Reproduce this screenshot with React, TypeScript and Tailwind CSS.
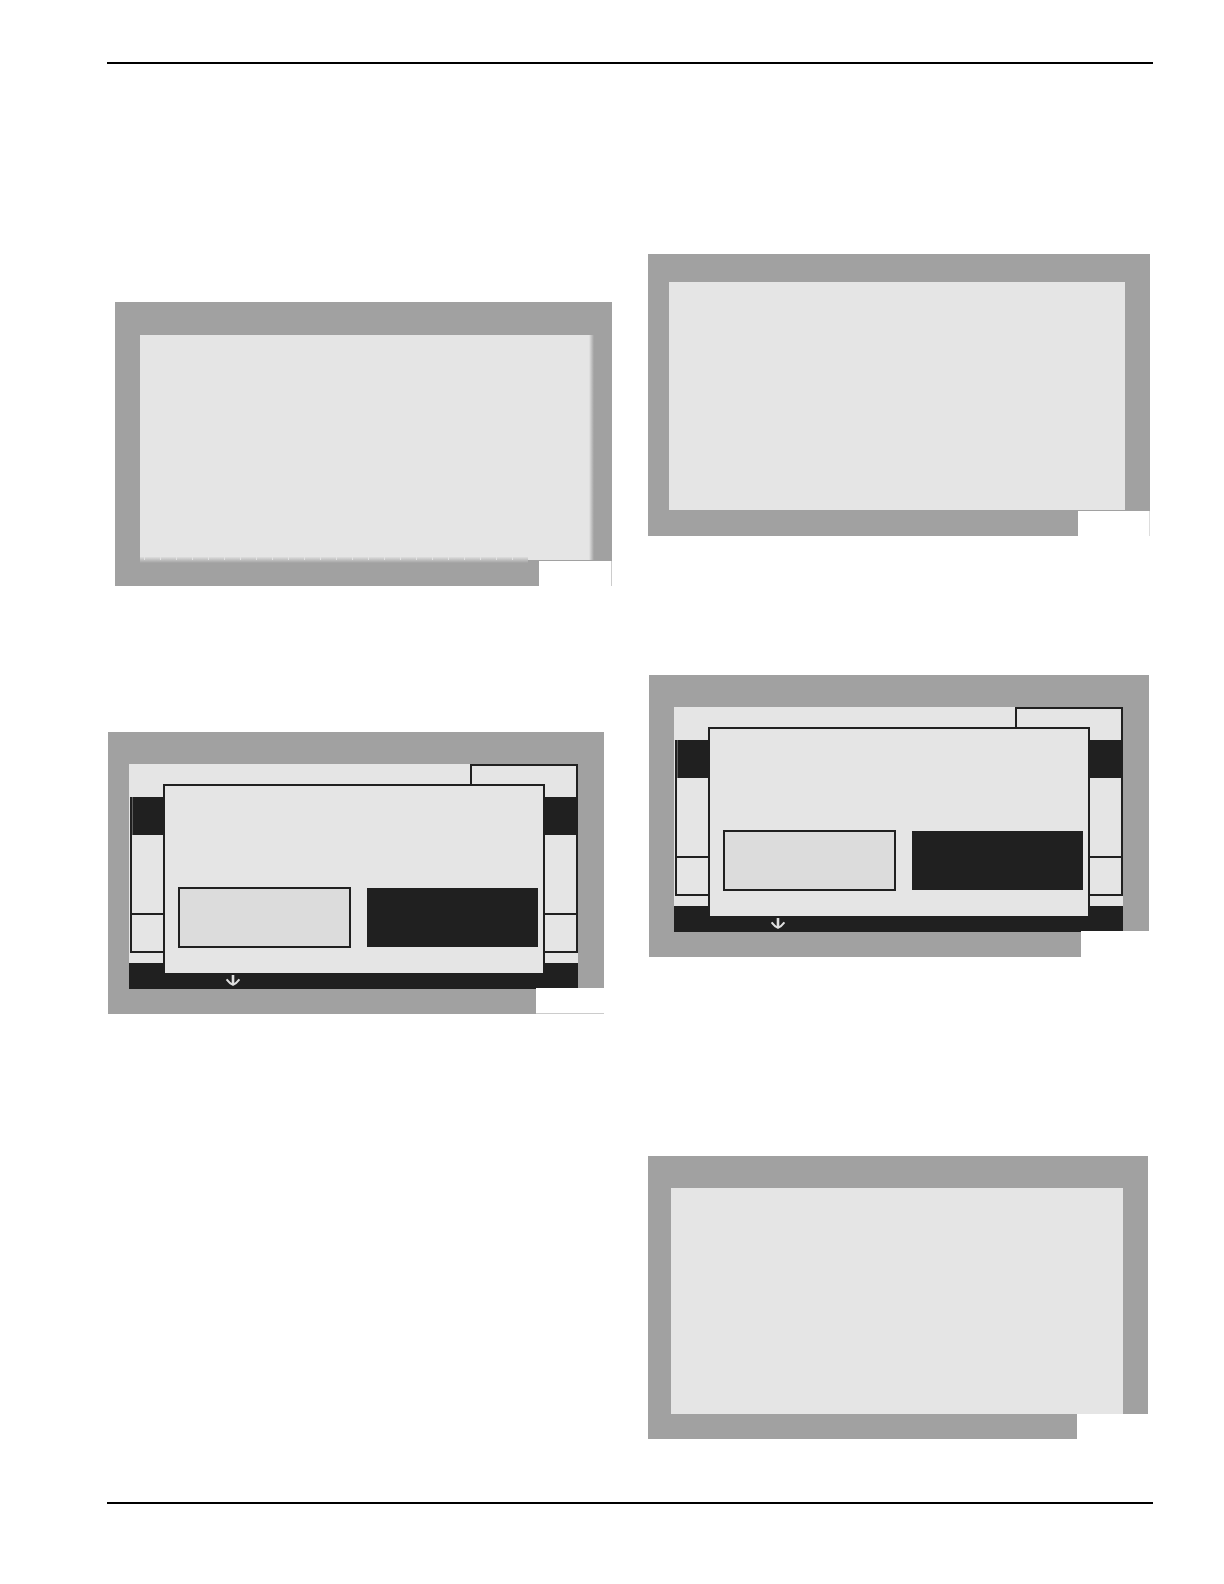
import type { ReactNode } from "react";

type FigureProps = {
  label: string;
  spacing: string;
  frame: string;
  strip: string;
  corner?: string;
  children: ReactNode;
};

/* A display surrounded by a grey bezel whose lower right corner is cut out. */
function Figure({ label, spacing, frame, strip, corner = "", children }: FigureProps) {
  return (
    <figure aria-label={label} className={`flex flex-col ${spacing}`}>
      <div className={`border-[#a1a1a1] bg-[#e5e5e5] ${frame}`}>{children}</div>
      <div className="flex">
        <div className={`flex-1 bg-[#a1a1a1] ${strip}`} />
        <div className={corner} />
      </div>
    </figure>
  );
}

function DownArrow() {
  return (
    <svg width="14" height="11" viewBox="0 0 14 11" fill="none" stroke="#dedede" aria-hidden="true">
      <path d="M7 0V10" strokeWidth="2.6" />
      <path d="M0.6 4.4C2 6.4 4.2 8.6 7 9.8C9.8 8.6 12 6.4 13.4 4.4" strokeWidth="2" />
    </svg>
  );
}

/* Menu list in the background with a two-button message box above it. */
function DialogScreen() {
  return (
    <div className="relative flex h-56 flex-col">
      <div className="flex h-[33px] justify-end">
        <div className="w-[108px] border-2 border-b-0 border-[#202020]" />
      </div>
      <div className="ml-px flex flex-1 flex-col border-2 border-t-0 border-[#202020]">
        <div className="h-[38px] border-l border-[#606060] bg-[#202020]" />
        <div className="flex-1" />
        <div className="h-[38px] border-t-2 border-[#202020]" />
      </div>
      <div className="h-[10px]" />
      <div className="h-[25px] bg-[#202020] pt-3 pl-[97px]">
        <DownArrow />
      </div>
      <div
        role="dialog"
        aria-label="Message"
        className="absolute top-5 right-[33px] left-[34px] flex h-[191px] flex-col justify-end border-2 border-[#202020] bg-[#e5e5e5] pr-[5px] pb-[25px] pl-[13px]"
      >
        <div className="grid grid-cols-[173fr_171fr] items-center gap-4">
          <button type="button" aria-label="First option" className="h-[61px] border-2 border-[#202020] bg-[#dcdcdc]" />
          <button type="button" aria-label="Second option" className="h-[59px] bg-[#202020]" />
        </div>
      </div>
    </div>
  );
}

/* Black edge that closes the dialog screen above the lower bezel. */
const closingEdge = "border-t border-t-[#202020]";

export default function App() {
  return (
    <main className="bg-white pt-[62px] pr-[71px] pb-20 pl-[107px]">
      <hr className="border-t-2 border-black" />
      <div className="grid grid-cols-2 gap-9">
        <section>
          <Figure
            label="Display 1"
            spacing="mt-[238px] ml-2"
            frame="border-t-[33px] border-r-[18px] border-b border-l-[25px]"
            strip="h-[25px]"
            corner="w-[73px] border-r border-[#cccccc]"
          >
            <div className="relative flex h-[225px] justify-end">
              <div className="w-[5px] bg-linear-to-r from-[#e5e5e5] to-[#a1a1a1]" />
              <div className="absolute right-[66px] -bottom-[3px] left-0 h-[6px] bg-linear-to-b from-[#dedede] to-[#a1a1a1]">
                <div className="h-[3px] bg-[repeating-linear-gradient(90deg,transparent_0_4px,#e2e2e2_4px_5px,transparent_5px_16px)]" />
              </div>
            </div>
          </Figure>
          <Figure
            label="Display 2"
            spacing="mt-[146px] mr-2 ml-px"
            frame="border-t-[32px] border-r-[26px] border-l-[21px]"
            strip="h-[26px]"
            corner="w-[68px] border-b border-[#cccccc]"
          >
            <DialogScreen />
            <div className="relative">
              <div className={`absolute top-0 right-[42px] left-0 ${closingEdge}`} />
            </div>
          </Figure>
        </section>
        <section>
          <Figure
            label="Display 3"
            spacing="mt-[190px] mr-[3px]"
            frame="border-t-[28px] border-r-[25px] border-b border-l-[21px]"
            strip="h-[25px]"
            corner="w-[72px] border-r border-[#dddddd]"
          >
            <div className="h-[228px]" />
          </Figure>
          <Figure
            label="Display 4"
            spacing="mt-[139px] mr-1 ml-px"
            frame="border-t-[32px] border-r-[26px] border-l-[25px]"
            strip="h-[26px]"
            corner="w-[68px]"
          >
            <DialogScreen />
            <div className="relative">
              <div className={`absolute top-0 right-[42px] left-0 ${closingEdge}`} />
            </div>
          </Figure>
          <Figure
            label="Display 5"
            spacing="mt-[199px] mr-[5px]"
            frame="border-t-[32px] border-r-[25px] border-l-[23px]"
            strip="h-[25px]"
            corner="w-[71px]"
          >
            <div className="h-[226px]" />
          </Figure>
        </section>
      </div>
      <hr className="mt-[63px] border-t-2 border-black" />
    </main>
  );
}
